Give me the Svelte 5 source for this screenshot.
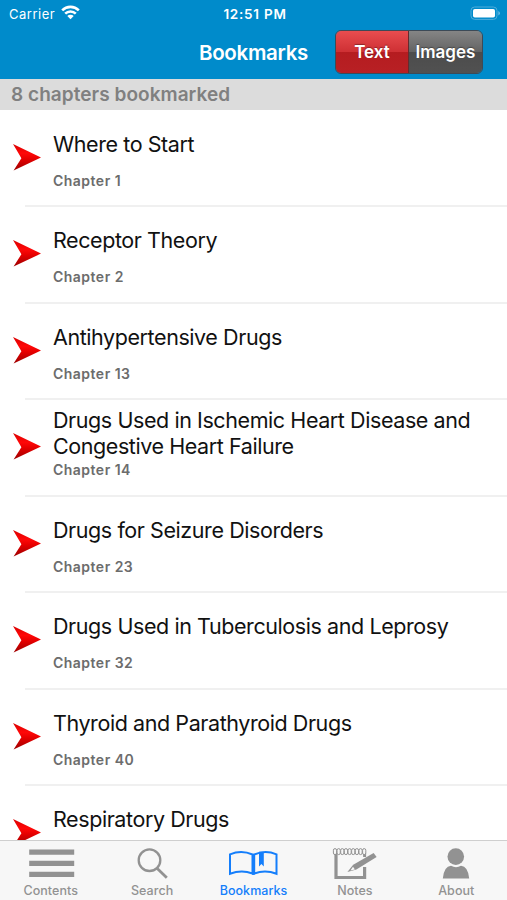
<script lang="ts">
	type Segment = 'Text' | 'Images';
	type Tab = 'Contents' | 'Search' | 'Bookmarks' | 'Notes' | 'About';

	const bookmarks: { title: string; chapter?: number }[] = [
		{ chapter: 1, title: 'Where to Start' },
		{ chapter: 2, title: 'Receptor Theory' },
		{ chapter: 13, title: 'Antihypertensive Drugs' },
		{ chapter: 14, title: 'Drugs Used in Ischemic Heart Disease and Congestive Heart Failure' },
		{ chapter: 23, title: 'Drugs for Seizure Disorders' },
		{ chapter: 32, title: 'Drugs Used in Tuberculosis and Leprosy' },
		{ chapter: 40, title: 'Thyroid and Parathyroid Drugs' },
		{ title: 'Respiratory Drugs' }
	];

	const segments: Segment[] = ['Text', 'Images'];
	const tabs: Tab[] = ['Contents', 'Search', 'Bookmarks', 'Notes', 'About'];

	let segment = $state<Segment>('Text');
	let activeTab = $state<Tab>('Bookmarks');
</script>

<div class="screen">
	<header>
		<div class="status-bar">
			<div class="carrier">
				<span>Carrier</span>
				<svg width="19" height="15" viewBox="0 0 19 15">
					<g fill="none" stroke="#fff" stroke-width="2.6">
						<path d="M1.2 5.3a11.8 11.8 0 0 1 16.6 0" />
						<path d="M4.2 8.7a7.5 7.5 0 0 1 10.6 0" />
					</g>
					<path d="M6.3 11.1a4.6 4.6 0 0 1 6.4 0L9.5 14.2z" fill="#fff" />
				</svg>
			</div>
			<span class="time">12:51 PM</span>
			<svg class="battery" width="31" height="15" viewBox="0 0 31 15">
				<rect x="1" y="1" width="26" height="12.4" rx="3.6" fill="none" stroke="#4fadda" />
				<rect x="3" y="3" width="22" height="8.6" rx="1.8" fill="#fff" />
				<path d="M28.3 5v4.6q1.7-.8 1.7-2.3t-1.7-2.3z" fill="#66b9e3" />
			</svg>
		</div>
		<div class="nav-bar">
			<h1>Bookmarks</h1>
			<div class="segmented">
				{#each segments as name (name)}
					<button class:selected={segment === name} onclick={() => (segment = name)}>{name}</button>
				{/each}
			</div>
		</div>
	</header>

	<div class="summary">{bookmarks.length} chapters bookmarked</div>

	<main>
		{#each bookmarks as item, i (item.title)}
			<div class="row">
				<svg class="arrow" width="30" height="29" viewBox="0 0 30 29">
					<defs>
						<linearGradient id="arrow-{i}" x1="0" y1="0" x2="0" y2="1">
							<stop offset="0" stop-color="#d90000" />
							<stop offset=".35" stop-color="#ff0808" />
							<stop offset=".55" stop-color="#e80000" />
							<stop offset="1" stop-color="#9c0000" />
						</linearGradient>
					</defs>
					<path d="M1 1L29 14.6L1.6 27.5L9.4 15.2z" fill="url(#arrow-{i})" />
				</svg>
				<div class="entry">
					<div class="title"><span>{item.title}</span></div>
					{#if item.chapter}
						<div class="chapter">Chapter {item.chapter}</div>
					{/if}
				</div>
			</div>
		{/each}
	</main>

	<nav>
		{#each tabs as tab (tab)}
			<button class="tab" class:active={activeTab === tab} onclick={() => (activeTab = tab)}>
				<svg width="50" height="36" viewBox="0 0 50 36">
					{#if tab === 'Contents'}
						<path d="M3.2 8.5h45v5.3h-45zM3.2 19.7h45v5.3h-45zM3.2 30.8h45v5.2h-45z" fill="currentColor" />
					{:else if tab === 'Search'}
						<g fill="none" stroke="currentColor">
							<circle cx="22.5" cy="19.2" r="10.8" stroke-width="2.3" />
							<path d="M30 27.2l9.8 9.6" stroke-width="2.8" />
						</g>
					{:else if tab === 'Bookmarks'}
						<g fill="none" stroke="currentColor" stroke-width="2">
							<path d="M2 13.3Q13.5 8.5 24.5 13.5V32.5Q13.5 28.3 2 32.8z" />
							<path d="M26.2 13.5Q37.3 8.5 48.5 13.3V32.8Q37.3 28.3 26.2 32.5z" />
						</g>
						<path d="M24 13h2.8v20.7H24zM31 10.8h4.8v14.6l-2.4-2.3-2.4 2.3z" fill="currentColor" />
					{:else if tab === 'Notes'}
						<path d="M6 12V36.5H34.6V26" fill="none" stroke="currentColor" stroke-width="3.2" />
						<path d="M34.6 12v4" stroke="currentColor" stroke-width="3" />
						<g fill="#f7f7f7" stroke="currentColor" stroke-width="1">
							{#each [0, 1, 2, 3, 4, 5, 6, 7, 8] as ring (ring)}
								<rect x={3.4 + ring * 3.65} y="7.6" width="3.2" height="6" rx="1.6" />
							{/each}
						</g>
						<path d="M43.6 12l3 4L26.4 28.6l-9 2.4 5.8-7.2z" fill="currentColor" />
						<path d="M23 25.8l1.9 2.6-4.5 1.2z" fill="#f7f7f7" />
					{:else}
						<circle cx="24.8" cy="15.6" r="8.3" fill="currentColor" />
						<path d="M11.8 37.5Q13 25.3 20 24.8Q25 27.5 30 24.8Q37 25.3 38.2 37.5z" fill="currentColor" />
					{/if}
				</svg>
				<span>{tab}</span>
			</button>
		{/each}
	</nav>
</div>

<style>
	:global(body) {
		margin: 0;
	}

	.screen {
		display: flex;
		flex-direction: column;
		height: 900px;
		overflow: hidden;
		background: #fff;
		font-family: Inter, 'Liberation Sans', sans-serif;
	}

	button {
		margin: 0;
		padding: 0;
		border: 0;
		background: none;
		font-family: inherit;
	}

	header {
		flex: none;
		height: 79px;
		background: #008bcb;
		color: #fff;
	}

	.status-bar {
		display: grid;
		grid-template-columns: 1fr auto 1fr;
		align-items: center;
		height: 27px;
		padding: 0 6px 0 9px;
		font-size: 13px;
	}

	.carrier {
		display: flex;
		align-items: center;
		gap: 6px;
		letter-spacing: 0.5px;
	}

	.carrier svg {
		margin-top: -2px;
	}

	.time {
		font-size: 13.5px;
		font-weight: 600;
		letter-spacing: 0.75px;
	}

	.battery {
		justify-self: end;
	}

	.nav-bar {
		display: grid;
		grid-template-columns: 1fr auto 1fr;
		align-items: center;
		height: 50px;
	}

	h1 {
		grid-column: 2;
		margin: 0;
		font-size: 20.5px;
		font-weight: 600;
		letter-spacing: -0.3px;
	}

	.segmented {
		display: grid;
		grid-template-columns: 73px 1fr;
		justify-self: end;
		box-sizing: border-box;
		width: 148px;
		height: 44px;
		margin-right: 24px;
		overflow: hidden;
		border: 1px solid #3c4a57;
		border-radius: 6px;
	}

	.segmented button {
		color: #fff;
		background: linear-gradient(#858585, #636363 50%, #4c4c4c 50%, #515151);
		font-size: 17px;
		font-weight: 600;
		text-shadow: 0 -1px 1px rgba(0, 0, 0, 0.35);
	}

	.segmented .selected {
		border-right: 1px solid #652b2e;
		background: linear-gradient(#e94d4f, #ce3034 50%, #b51c20 50%, #b82024);
	}

	.summary {
		flex: none;
		height: 31px;
		padding-left: 11px;
		background: #dcdcdc;
		color: #808080;
		font-size: 19px;
		font-weight: 600;
		line-height: 31px;
		letter-spacing: 0.05px;
	}

	main {
		flex: 1;
		min-height: 0;
		overflow: hidden;
	}

	.row {
		display: flex;
		height: 96.43px;
	}

	.arrow {
		flex: none;
		margin: 33px 11px 0 12px;
	}

	.entry {
		flex: 1;
		position: relative;
	}

	/* separator is inset, but starts left of the text */
	.entry::after {
		position: absolute;
		right: 0;
		bottom: -1px;
		left: -28px;
		height: 2px;
		background: #f0f0f0;
		content: '';
	}

	.title {
		display: flex;
		align-items: center;
		box-sizing: border-box;
		height: 66px;
		padding: 2px 20px 0 0;
		color: #111;
		font-size: 21.5px;
		line-height: 26px;
		letter-spacing: -0.42px;
	}

	.chapter {
		margin-top: -4px;
		color: #6c6c6c;
		font-size: 14px;
		font-weight: 600;
		line-height: 18px;
		letter-spacing: 0.48px;
	}

	nav {
		display: grid;
		flex: none;
		grid-template-columns: repeat(5, 1fr);
		box-sizing: border-box;
		height: 60px;
		border-top: 1px solid #cfcfcf;
		background: #f7f7f7;
	}

	.tab {
		display: flex;
		flex-direction: column;
		align-items: center;
		color: #929292;
		font-size: 12.5px;
		font-weight: 500;
		line-height: 16px;
		letter-spacing: 0.05px;
	}

	.tab svg {
		overflow: visible;
	}

	.tab span {
		margin-top: 6px;
	}

	.tab.active {
		color: #147efb;
	}
</style>
